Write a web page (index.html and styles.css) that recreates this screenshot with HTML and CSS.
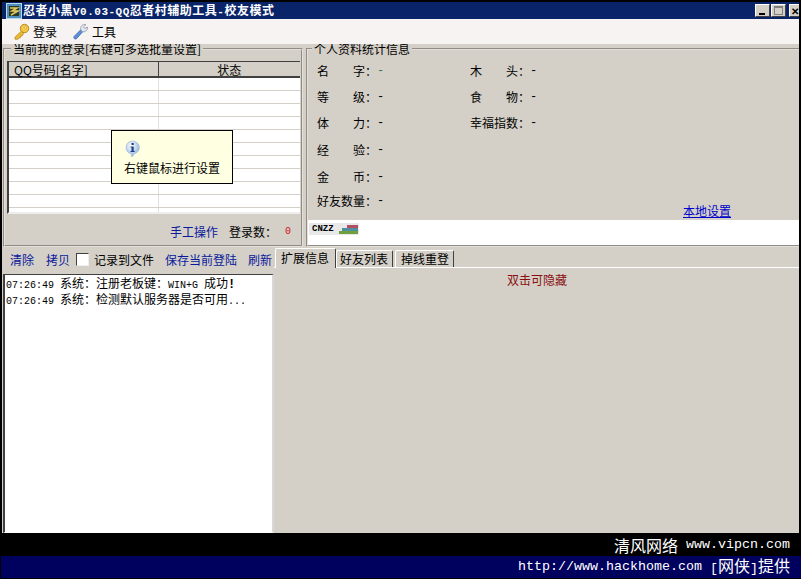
FILE: index.html
```html
<!DOCTYPE html>
<html lang="zh-CN">

<head>
    <meta charset="UTF-8">
    <title>忍者小黑</title>
    <link rel="stylesheet" href="styles.css">
</head>

<body>
    <div class="window">
        <div class="titlebar">
            <svg class="appicon" width="16" height="16" viewBox="0 0 16 16">
                <rect x="0.5" y="0.5" width="15" height="15" fill="#4a8fc0" stroke="#bcd6e6"/>
                <rect x="3" y="3" width="10" height="10" fill="#2c3a20"/>
                <path d="M4 5h7L6 8h6l-7 4" fill="none" stroke="#e8c860" stroke-width="1.5"/>
            </svg>
            <span class="title">忍者小黑<span class="lat">V0.03-QQ</span>忍者村辅助工具<span class="lat">-</span>校友模式</span>
            <div class="winbtns">
                <span class="winbtn"><i class="ico-min"></i></span>
                <span class="winbtn"><i class="ico-max"></i></span>
                <span class="winbtn close"><i class="ico-close">✕</i></span>
            </div>
        </div>

        <div class="toolbar">
            <span class="toolitem">
                <svg width="17" height="17" viewBox="0 0 17 17">
                    <circle cx="11.5" cy="5.5" r="4.2" fill="#f4c842" stroke="#b58a1e"/>
                    <circle cx="12.5" cy="4.5" r="1.1" fill="#fff6c8" stroke="#b58a1e" stroke-width="0.5"/>
                    <path d="M8.5 8 2 14.2v2h3l1-1.5h1.4l.4-1.8h1.4L10.500 10.500z" fill="#eeb92f" stroke="#b58a1e" stroke-width="0.8"/>
                </svg>
                登录
            </span>
            <span class="toolitem tool2">
                <svg width="17" height="17" viewBox="0 0 17 17">
                    <path d="M2 13.500 9 6.500l2 2-6.500 7.200a1.700 1.700 0 0 1-2.500-2.200z" fill="#5b8fd8" stroke="#3a62a4" stroke-width="0.7"/>
                    <path d="M8.800 6.800C8 3.500 10.500 0.800 14 1.500l-2.500 2.300 1.300 1.700 2.700-1.500c.4 3.300-2.800 5.600-5.200 4.600z" fill="#e4e8ee" stroke="#8b94a3" stroke-width="0.8"/>
                </svg>
                工具
            </span>
        </div>

        <div class="top">
            <fieldset class="group group-login">
                <legend>当前我的登录[右键可多选批量设置]</legend>
                <div class="tablewrap">
                    <table class="qqtable">
                        <thead>
                            <tr><th class="col-name">QQ号码[名字]</th><th class="col-state">状态</th></tr>
                        </thead>
                        <tbody>
                            <tr><td></td><td></td></tr>
                            <tr><td></td><td></td></tr>
                            <tr><td></td><td></td></tr>
                            <tr><td></td><td></td></tr>
                            <tr><td></td><td></td></tr>
                            <tr><td></td><td></td></tr>
                            <tr><td></td><td></td></tr>
                            <tr><td></td><td></td></tr>
                            <tr><td></td><td></td></tr>
                            <tr><td></td><td></td></tr>
                            <tr><td></td><td></td></tr>
                        </tbody>
                    </table>
                </div>
                <div class="loginfoot">
                    <a class="link">手工操作</a>
                    <span class="count">登录数：</span>
                    <span class="zero">0</span>
                </div>
            </fieldset>

            <fieldset class="group group-info">
                <legend>个人资料统计信息</legend>
                <div class="stats">
                    <div class="stat"><span class="label"><b>名</b><b>字</b></span><span class="colon">：</span><span class="val green">-</span></div>
                    <div class="stat"><span class="label"><b>木</b><b>头</b></span><span class="colon">：</span><span class="val">-</span></div>
                    <div class="stat"><span class="label"><b>等</b><b>级</b></span><span class="colon">：</span><span class="val">-</span></div>
                    <div class="stat"><span class="label"><b>食</b><b>物</b></span><span class="colon">：</span><span class="val">-</span></div>
                    <div class="stat"><span class="label"><b>体</b><b>力</b></span><span class="colon">：</span><span class="val">-</span></div>
                    <div class="stat"><span class="label"><b>幸</b><b>福</b><b>指</b><b>数</b></span><span class="colon">：</span><span class="val">-</span></div>
                    <div class="stat"><span class="label"><b>经</b><b>验</b></span><span class="colon">：</span><span class="val">-</span></div>
                    <div class="stat"></div>
                    <div class="stat"><span class="label"><b>金</b><b>币</b></span><span class="colon">：</span><span class="val">-</span></div>
                    <div class="stat"></div>
                    <div class="stat"><span class="label"><b>好</b><b>友</b><b>数</b><b>量</b></span><span class="colon">：</span><span class="val">-</span></div>
                    <div class="stat stat-link"><a class="localset">本地设置</a></div>
                </div>
                <div class="adstrip">
                    <span class="cnzz">
                        <span class="cnzz-text">CNZZ</span>
                        <span class="cnzz-bars"><i class="bar1"></i><i class="bar2"></i><i class="bar3"></i></span>
                    </span>
                </div>
            </fieldset>

            <div class="tip">
                <svg width="17" height="18" viewBox="0 0 17 18">
                    <defs>
                        <radialGradient id="bubble" cx="0.4" cy="0.3" r="0.8">
                            <stop offset="0" stop-color="#ffffff"/>
                            <stop offset="1" stop-color="#7fa6d8"/>
                        </radialGradient>
                    </defs>
                    <path d="M8.500 1a7 6.500 0 0 1 2 12.700L8 17l-1-3.300A7 6.500 0 0 1 8.500 1z" fill="url(#bubble)" stroke="#9ab4d4" stroke-width="0.6"/>
                    <rect x="7.500" y="3" width="2.200" height="2" fill="#1c3f86"/>
                    <path d="M6.500 6.500h3.200v4.500h1v1H6.500v-1h1V7.500h-1z" fill="#1c3f86"/>
                </svg>
                <div class="tiptext">右键鼠标进行设置</div>
            </div>
        </div>

        <div class="bottom">
            <div class="logpane">
                <div class="logtools">
                    <a class="link">清除</a>
                    <a class="link">拷贝</a>
                    <span class="checkbox"></span>
                    <span class="checklabel">记录到文件</span>
                    <a class="link save">保存当前登陆</a>
                    <a class="link">刷新</a>
                </div>
                <div class="logbox">
                    <div class="logline"><span class="lat">07:26:49 </span>系统：注册老板键：<span class="lat">WIN+G </span>成功<b class="bang">!</b></div>
                    <div class="logline"><span class="lat">07:26:49 </span>系统：检测默认服务器是否可用<span class="lat">...</span></div>
                </div>
            </div>
            <div class="tabpane">
                <div class="tabs">
                    <span class="tab active">扩展信息</span>
                    <span class="tab">好友列表</span>
                    <span class="tab">掉线重登</span>
                </div>
                <div class="hidehint">双击可隐藏</div>
            </div>
        </div>
    </div>

    <div class="foot foot-black"><span>清风网络</span><span class="foot-lat">www.vipcn.com</span></div>
    <div class="foot foot-navy"><span class="foot-lat">http://www.hackhome.com</span><span><span class="foot-lat">[</span>网侠<span class="foot-lat">]</span>提供</span></div>
</body>

</html>
```

FILE: styles.css
```css
* {
    box-sizing: border-box;
}

body {
    margin: 0;
    width: 801px;
    height: 579px;
    overflow: hidden;
    background-color: black;
    font-family: "Noto Sans CJK SC", "Liberation Sans", sans-serif;
    font-size: 12px;
    line-height: 14px;
    color: black;
}

.lat {
    font-family: "Liberation Mono", monospace;
    font-size: 10px;
    white-space: pre;
}

.window {
    margin: 2px 2px 0;
    height: 531px;
    background-color: #d4d0c8;
}

/* title bar */
.titlebar {
    display: flex;
    align-items: center;
    height: 17px;
    background-color: #0a246a;
    color: white;
    padding-left: 4px;
}

.appicon {
    flex: none;
}

.title {
    margin-left: 1px;
    font-weight: bold;
    letter-spacing: 0.5px;
    white-space: nowrap;
}

.title .lat {
    font-size: 11px;
}

.winbtns {
    display: flex;
    margin-left: auto;
    gap: 1px;
}

.winbtn {
    display: flex;
    align-items: center;
    justify-content: center;
    width: 15px;
    height: 13px;
    background-color: #d4d0c8;
    border: 1px solid;
    border-color: white #404040 #404040 white;
    color: black;
    font-size: 10px;
}

.winbtn.close {
    justify-content: flex-start;
    width: 10px;
    margin-left: 2px;
    border-right: 0;
    font-weight: bold;
    overflow: hidden;
}

.ico-close {
    padding-left: 1px;
    font-style: normal;
}

.ico-min {
    width: 6px;
    height: 2px;
    background-color: black;
    margin-top: 7px;
    margin-right: 2px;
}

.ico-max {
    width: 9px;
    height: 9px;
    border: 1px solid #808080;
    border-top-width: 2px;
}

/* toolbar */
.toolbar {
    position: relative;
    z-index: 1;
    display: flex;
    align-items: center;
    height: 25px;
    padding-left: 11px;
    background-color: #f7f3f3;
}

.toolitem {
    display: flex;
    align-items: center;
    gap: 3px;
}

.tool2 {
    margin-left: 15px;
}

/* top half */
.top {
    position: relative;
    display: flex;
    height: 203px;
    padding-left: 1px;
    gap: 3px;
}

.group {
    margin: -1px 0 0;
    min-width: 0;
    height: 204px;
    padding: 0;
    border: 2px groove #e4e0d8;
}

.group legend {
    margin-left: 4px;
    padding: 0 2px;
    line-height: 12px;
}

.group-login {
    width: 300px;
    flex: none;
    padding: 6px 1px 0 2px;
}

.group-info {
    flex: 1;
    border-right: 0;
}

.tablewrap {
    height: 153px;
    overflow: hidden;
    border-left: 2px solid #404040;
    border-bottom: 2px solid #eee;
    background-color: white;
}

.qqtable {
    width: 292px;
    table-layout: fixed;
    border-collapse: collapse;
}

.qqtable th {
    height: 15px;
    padding: 2px 0 0 5px;
    line-height: 12px;
    background-color: #d4d0c8;
    border: 1px solid #404040;
    border-width: 1px 1px 2px 0;
    font-weight: normal;
    text-align: left;
}

.col-name {
    width: 149px;
}

.qqtable .col-state {
    text-align: center;
    padding: 2px 0 0;
}

.qqtable td {
    height: 13px;
    padding: 0;
    border-bottom: 1px solid #d4d0c8;
    border-right: 1px solid #e4e0d8;
}

.loginfoot {
    display: flex;
    align-items: center;
    height: 30px;
    padding: 5px 0 0 163px;
}

.link {
    color: #0a1a9a;
    white-space: nowrap;
}

.count {
    margin-left: 11px;
}

.zero {
    margin-left: 8px;
    color: #d01010;
    font-family: "Liberation Mono", monospace;
    font-size: 10px;
}

.stats {
    display: grid;
    grid-template-columns: 153px 1fr;
    grid-template-rows: 26px 26px 27px 27px 24px 22px;
    height: 165px;
    padding: 5px 0 0 9px;
}

.stat {
    display: flex;
    align-items: center;
    height: 22px;
}

.label {
    display: flex;
    justify-content: space-between;
    width: 48px;
}

.label b {
    font-weight: normal;
}

.colon {
    width: 12px;
}

.val {
    font-family: "Liberation Mono", monospace;
}

.green {
    color: #3a7a5a;
}

.localset {
    margin-left: 213px;
    margin-top: 20px;
    color: #0000c8;
    text-decoration: underline;
}

.adstrip {
    height: 25px;
    padding: 3px 0 0 1px;
    background-color: white;
}

.cnzz {
    display: flex;
    align-items: center;
    justify-content: space-between;
    width: 50px;
    height: 12px;
    padding: 0 1px 0 3px;
    background-color: #e8e8e8;
}

.cnzz-text {
    font-family: "Liberation Mono", monospace;
    font-size: 9px;
    font-weight: bold;
    line-height: 10px;
}

.cnzz-bars {
    display: flex;
    flex-direction: column;
    align-items: flex-end;
}

.cnzz-bars i {
    display: block;
    height: 3px;
}

.bar1 {
    width: 11px;
    background-color: #b05060;
}

.bar2 {
    width: 16px;
    background-color: #4f8fa0;
}

.bar3 {
    width: 19px;
    background-color: #6f9f3f;
}

/* tooltip over the list */
.tip {
    position: absolute;
    left: 109px;
    top: 86px;
    width: 122px;
    height: 54px;
    padding: 9px 0 0 12px;
    background-color: #ffffe1;
    border: 1px solid black;
    color: black;
}

.tip svg {
    display: block;
}

.tiptext {
    margin-top: 3px;
}

/* bottom half */
.bottom {
    display: flex;
    height: 286px;
}

.logpane {
    flex: none;
    width: 272px;
    padding-left: 1px;
}

.logtools {
    display: flex;
    align-items: center;
    height: 27px;
    padding: 0 0 2px 7px;
    overflow: hidden;
    white-space: nowrap;
}

.logtools .link + .link {
    margin-left: 12px;
}

.checkbox {
    flex: none;
    width: 13px;
    height: 13px;
    margin-left: 6px;
    background-color: white;
    border: 1px solid;
    border-color: #404040 #eee #eee #404040;
}

.checklabel {
    margin-left: 5px;
}

.logtools .save {
    margin-left: 11px;
    margin-right: -1px;
}

.logbox {
    height: 259px;
    padding: 0 0 0 1px;
    background-color: white;
    border: 1px solid;
    border-color: #404040 #d8d8d8 white #404040;
    border-left-width: 2px;
    border-right-width: 2px;
}

.logline {
    height: 16px;
    line-height: 16px;
    white-space: nowrap;
}

.bang {
    font-family: "Liberation Mono", monospace;
}

.tabpane {
    flex: 1;
    min-width: 0;
}

.tabs {
    display: flex;
    align-items: flex-end;
    height: 21px;
    padding-left: 1px;
    border-bottom: 1px solid white;
}

.tab {
    height: 17px;
    padding: 1px 4px 0 3px;
    margin-right: 2px;
    border: 1px solid;
    border-color: white #404040 transparent white;
    border-bottom: 0;
    border-radius: 2px 2px 0 0;
    white-space: nowrap;
}

.tab:last-child {
    padding-left: 5px;
}

.tab.active {
    height: 20px;
    padding: 2px 6px 0 5px;
    margin-right: 0;
    margin-bottom: -1px;
    background-color: #d4d0c8;
}

.hidehint {
    margin-top: 5px;
    margin-left: 233px;
    color: #8a1010;
}

/* footer bands */
.foot {
    display: flex;
    align-items: center;
    justify-content: flex-end;
    gap: 8px;
    padding-right: 11px;
    color: white;
    font-size: 16px;
    white-space: nowrap;
}

.foot-black {
    height: 23px;
    background-color: black;
}

.foot-navy {
    height: 22px;
    margin-left: 1px;
    background-color: #00005e;
}

.foot-lat {
    font-family: "Liberation Mono", monospace;
    font-size: 13.330px;
}
```
